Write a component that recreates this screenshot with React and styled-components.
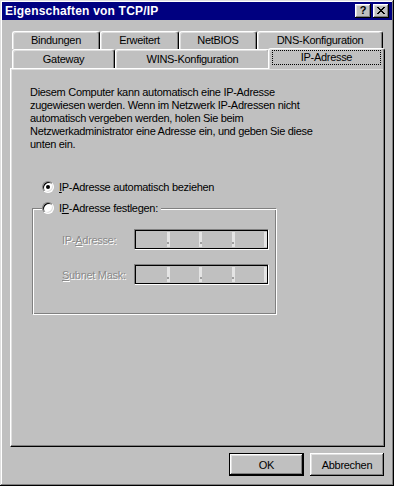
import React from 'react';
import styled, { createGlobalStyle } from 'styled-components';

const GlobalStyle = createGlobalStyle`
  body {
    margin: 0;
    background: #c0c0c0;
    font-family: "Liberation Sans", Arial, sans-serif;
    font-size: 11px;
    letter-spacing: -0.3px;
  }
`;

const Window = styled.div`
  width: 394px;
  height: 486px;
  box-sizing: border-box;
  padding: 2px;
  background: #c0c0c0;
  box-shadow: inset -1px -1px #000, inset 1px 1px #dfdfdf,
    inset -2px -2px #808080, inset 2px 2px #fff;
  display: flex;
  flex-direction: column;
`;

const TitleBar = styled.div`
  height: 18px;
  background: #000080;
  display: flex;
  align-items: center;
  justify-content: space-between;
  padding: 0 3px 0 3px;
`;

const Title = styled.span`
  color: #fff;
  font-weight: bold;
  font-size: 12px;
  letter-spacing: 0.2px;
`;

const TitleButtons = styled.div`
  display: flex;
  gap: 2px;
`;

const TitleButton = styled.div`
  width: 16px;
  height: 14px;
  box-sizing: border-box;
  background: #c0c0c0;
  box-shadow: inset -1px -1px #000, inset 1px 1px #fff,
    inset -2px -2px #808080, inset 2px 2px #dfdfdf;
  display: flex;
  align-items: center;
  justify-content: center;
  font-weight: bold;
  font-size: 11px;
  color: #000;
  line-height: 1;
  letter-spacing: 0;
  padding-bottom: 1px;
`;

const Body = styled.div`
  padding: 11px 0 0 8px;
  width: 375px;
`;

const TabRow = styled.div`
  display: flex;
  align-items: flex-end;
  height: ${(p) => p.h}px;
  padding-left: 2px;
`;

const Tab = styled.div`
  position: relative;
  box-sizing: border-box;
  width: ${(p) => p.w}px;
  height: ${(p) => (p.active ? 21 : p.h)}px;
  margin: ${(p) => (p.active ? '0 -1px -1px -2px' : '0')};
  z-index: ${(p) => (p.active ? 2 : 0)};
  background: #c0c0c0;
  border-top: 1px solid #fff;
  border-left: 1px solid #fff;
  border-right: 1px solid #000;
  border-radius: 3px 3px 0 0;
  box-shadow: inset -1px 0 #808080, inset 1px 1px #dfdfdf;
  display: flex;
  align-items: ${(p) => (p.active ? 'flex-start' : 'center')};
  justify-content: center;
  padding: ${(p) => (p.active ? '1px 3px 0 3px' : '0 0 1px 0')};
  color: #000;
  white-space: nowrap;
`;

const FocusLabel = styled.span`
  display: block;
  width: 100%;
  box-sizing: border-box;
  border: 1px dotted #000;
  text-align: center;
  line-height: 13px;
`;

const Panel = styled.div`
  position: relative;
  z-index: 1;
  box-sizing: border-box;
  width: 375px;
  height: 379px;
  padding: 17px 0 0 19px;
  border-top: 1px solid #fff;
  border-left: 1px solid #fff;
  border-right: 1px solid #000;
  border-bottom: 1px solid #000;
  box-shadow: inset -1px -1px #808080, inset 1px 1px #dfdfdf;
`;

const Text = styled.p`
  margin: 0;
  line-height: 13px;
  white-space: nowrap;
  color: #000;
`;

const RadioRow = styled.label`
  display: flex;
  align-items: center;
  gap: 5px;
  height: 14px;
  color: #000;
  white-space: nowrap;
`;

const FirstRadio = styled(RadioRow)`
  margin: 29px 0 0 12px;
`;

const Radio = styled.span`
  position: relative;
  width: 12px;
  height: 12px;
  box-sizing: border-box;
  border-radius: 50%;
  background: #fff;
  border: 1px solid;
  border-color: #808080 #fff #fff #808080;
  box-shadow: inset 1px 1px #000, inset -1px -1px #dfdfdf;

  &::after {
    content: '';
    display: ${(p) => (p.checked ? 'block' : 'none')};
    position: absolute;
    left: 3px;
    top: 3px;
    width: 4px;
    height: 4px;
    border-radius: 50%;
    background: #000;
  }
`;

const Group = styled.fieldset`
  margin: 7px 0 0 2px;
  width: 245px;
  height: 114px;
  box-sizing: border-box;
  padding: 14px 0 0 29px;
  border: 1px solid;
  border-color: #808080 #fff #fff #808080;
  box-shadow: inset 1px 1px #fff, inset -1px -1px #808080;
`;

const Legend = styled.legend`
  padding: 0 3px 0 0;
  margin-left: -20px;
  background: #c0c0c0;
`;

const FieldRow = styled.div`
  display: flex;
  align-items: center;
  height: 21px;
  margin-bottom: 14px;
`;

const FieldLabel = styled.span`
  width: 72px;
  color: #8a8a8a;
  text-shadow: 1px 1px 0 #fff;
  white-space: nowrap;
`;

const IpBox = styled.div`
  width: 135px;
  height: 21px;
  box-sizing: border-box;
  border: 1px solid;
  border-color: #808080 #fff #fff #808080;
  box-shadow: inset 1px 1px #000, inset -1px -1px #000;
  padding: 2px 1px 2px 2px;
  display: flex;
`;

const Segment = styled.div`
  flex: 1;
  display: flex;
  justify-content: flex-end;
`;

const Separator = styled.div`
  width: 3px;
  background: #e4e4e4;
  display: flex;
  align-items: flex-end;
  justify-content: center;
  padding-bottom: 3px;
  box-sizing: border-box;
`;

const Dot = styled.span`
  width: 2px;
  height: 2px;
  background: #a0a0a0;
`;

const ButtonRow = styled.div`
  display: flex;
  justify-content: flex-end;
  gap: 6px;
  margin-top: 6px;
  padding-right: 1px;
`;

const Button = styled.button`
  width: ${(p) => (p.primary ? 75 : 74)}px;
  height: 23px;
  box-sizing: border-box;
  background: #c0c0c0;
  font-family: "Liberation Sans", Arial, sans-serif;
  font-size: 11px;
  letter-spacing: -0.3px;
  color: #000;
  padding: 0;
  border: ${(p) => (p.primary ? '1px solid #000' : 'none')};
  box-shadow: inset -1px -1px #000, inset 1px 1px #fff,
    inset -2px -2px #808080, inset 2px 2px #dfdfdf;
`;

const u = (s) => <span style={{ textDecoration: 'underline' }}>{s}</span>;

const IpField = () => (
  <IpBox>
    {[0, 1, 2, 3].map((i) => (
      <Segment key={i}>
        <Separator>{i < 3 && <Dot />}</Separator>
      </Segment>
    ))}
  </IpBox>
);

const CloseGlyph = () => (
  <svg width="8" height="7" viewBox="0 0 8 7" shapeRendering="crispEdges">
    <path d="M0 0h2v1h-2zM6 0h2v1h-2zM1 1h2v1h-2zM5 1h2v1h-2zM2 2h4v1h-4zM3 3h2v1h-2zM2 4h4v1h-4zM1 5h2v1h-2zM5 5h2v1h-2zM0 6h2v1h-2zM6 6h2v1h-2z" fill="#000" />
  </svg>
);

export default function App() {
  return (
    <>
      <GlobalStyle />
      <Window>
        <TitleBar>
          <Title>Eigenschaften von TCP/IP</Title>
          <TitleButtons>
            <TitleButton>?</TitleButton>
            <TitleButton><CloseGlyph /></TitleButton>
          </TitleButtons>
        </TitleBar>
        <Body>
          <TabRow h={18}>
            <Tab w={88} h={18}>Bindungen</Tab>
            <Tab w={79} h={18}>Erweitert</Tab>
            <Tab w={78} h={18}>NetBIOS</Tab>
            <Tab w={126} h={18}>DNS-Konfiguration</Tab>
          </TabRow>
          <TabRow h={19}>
            <Tab w={103} h={19}>Gateway</Tab>
            <Tab w={155} h={19}>WINS-Konfiguration</Tab>
            <Tab w={117} active>
              <FocusLabel>IP-Adresse</FocusLabel>
            </Tab>
          </TabRow>
          <Panel>
            <Text>
              Diesem Computer kann automatisch eine IP-Adresse<br />
              zugewiesen werden. Wenn im Netzwerk IP-Adressen nicht<br />
              automatisch vergeben werden, holen Sie beim<br />
              Netzwerkadministrator eine Adresse ein, und geben Sie diese<br />
              unten ein.
            </Text>
            <FirstRadio>
              <Radio checked />
              <span>{u('I')}P-Adresse automatisch beziehen</span>
            </FirstRadio>
            <Group>
              <Legend>
                <RadioRow>
                  <Radio />
                  <span>I{u('P')}-Adresse festlegen:</span>
                </RadioRow>
              </Legend>
              <FieldRow>
                <FieldLabel>IP-{u('A')}dresse:</FieldLabel>
                <IpField />
              </FieldRow>
              <FieldRow>
                <FieldLabel>{u('S')}ubnet Mask:</FieldLabel>
                <IpField />
              </FieldRow>
            </Group>
          </Panel>
          <ButtonRow>
            <Button primary>OK</Button>
            <Button>Abbrechen</Button>
          </ButtonRow>
        </Body>
      </Window>
    </>
  );
}
